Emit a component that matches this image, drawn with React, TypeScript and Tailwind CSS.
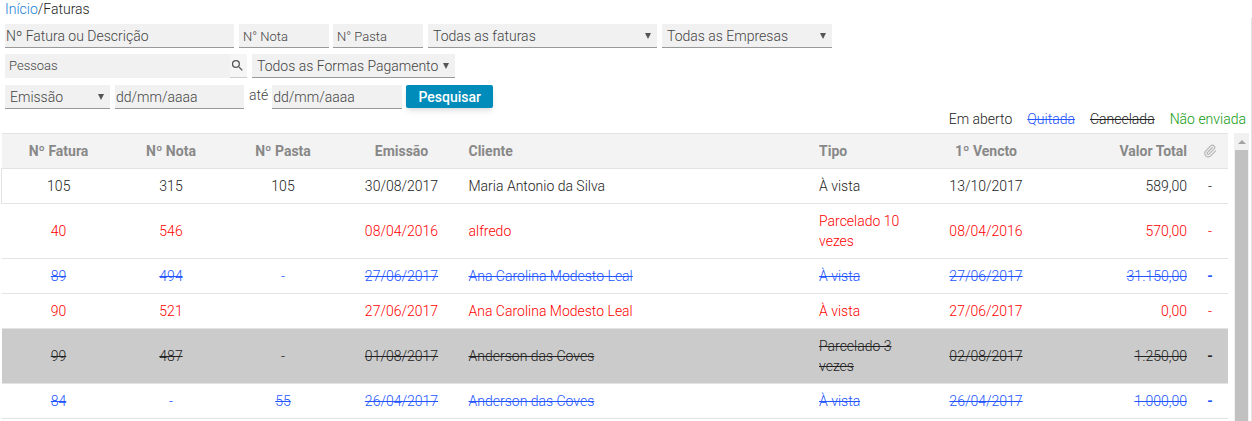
import React, { useState } from "react"
import { MdSearch } from "react-icons/md"
import { Paperclip } from "lucide-react"

type Status = "open" | "late" | "paid" | "cancelled"

type Invoice = {
	number: string,
	note: string,
	folder: string,
	issued: string,
	client: string,
	kind: string,
	due: string,
	total: string,
	status: Status,
}

const invoices: Invoice[] = [
	{ number: "105", note: "315", folder: "105", issued: "30/08/2017", client: "Maria Antonio da Silva", kind: "À vista", due: "13/10/2017", total: "589,00", status: "open" },
	{ number: "40", note: "546", folder: "", issued: "08/04/2016", client: "alfredo", kind: "Parcelado 10 vezes", due: "08/04/2016", total: "570,00", status: "late" },
	{ number: "89", note: "494", folder: "-", issued: "27/06/2017", client: "Ana Carolina Modesto Leal", kind: "À vista", due: "27/06/2017", total: "31.150,00", status: "paid" },
	{ number: "90", note: "521", folder: "", issued: "27/06/2017", client: "Ana Carolina Modesto Leal", kind: "À vista", due: "27/06/2017", total: "0,00", status: "late" },
	{ number: "99", note: "487", folder: "-", issued: "01/08/2017", client: "Anderson das Coves", kind: "Parcelado 3 vezes", due: "02/08/2017", total: "1.250,00", status: "cancelled" },
	{ number: "84", note: "-", folder: "55", issued: "26/04/2017", client: "Anderson das Coves", kind: "À vista", due: "26/04/2017", total: "1.000,00", status: "paid" },
]

const rowColor: Record<Status, string> = {
	open: "text-[#222222]",
	late: "text-[#ff0000]",
	paid: "text-[#2255ff]",
	cancelled: "bg-[#cbcbcb] text-[#222222]",
}

const field = "h-6 border-b border-[#999999] bg-[#f1f1f1] text-[#444444] placeholder:text-[#444444] placeholder:opacity-100 focus:outline-none"

type SelectProps = {
	label: string,
	options: string[],
	width: string,
}

function Select({ label, options, width }: SelectProps) {
	return (
		<div className={`relative ${width}`}>
			<select aria-label={label} className={`${field} block w-full appearance-none pl-[5px] pr-4 text-sm`}>
				{options.map((option) => (
					<option key={option}>{option}</option>
				))}
			</select>
			<svg viewBox="0 0 6 6" className="pointer-events-none absolute right-[6px] top-[9px] size-[6px] fill-[#555555]">
				<path d="M0 0h6L3 6z" />
			</svg>
		</div>
	)
}

function Struck({ on, children }: { on: boolean, children: React.ReactNode }) {
	return on && children !== "-" ? <s>{children}</s> : <>{children}</>
}

function InvoiceRow({ invoice }: { invoice: Invoice }) {
	const struck = invoice.status === "paid" || invoice.status === "cancelled"

	return (
		<tr className={`border-b border-[#e3e3e3] ${rowColor[invoice.status]}`}>
			<td className={`text-center ${invoice.status === "open" ? "border-l border-[#e3e3e3]" : ""}`}>
				<Struck on={struck}>{invoice.number}</Struck>
			</td>
			<td className="text-center"><Struck on={struck}>{invoice.note}</Struck></td>
			<td className="text-center"><Struck on={struck}>{invoice.folder}</Struck></td>
			<td className="text-center"><Struck on={struck}>{invoice.issued}</Struck></td>
			<td className="px-[5px]"><Struck on={struck}>{invoice.client}</Struck></td>
			<td className="px-[5px] py-[7px]"><Struck on={struck}>{invoice.kind}</Struck></td>
			<td className="text-center"><Struck on={struck}>{invoice.due}</Struck></td>
			<td className="px-[5px] text-right"><Struck on={struck}>{invoice.total}</Struck></td>
			<td className={`text-center ${struck ? "font-bold" : ""}`}>-</td>
		</tr>
	)
}

function App() {
	const [search, setSearch] = useState("")
	const [note, setNote] = useState("")
	const [folder, setFolder] = useState("")
	const [person, setPerson] = useState("")
	const [from, setFrom] = useState("")
	const [to, setTo] = useState("")

	return (
		<div className="flex min-h-screen flex-col bg-white font-['Roboto',sans-serif] text-sm font-light text-[#222222]">
			<nav className="pl-[5px] leading-[18px]">
				<a href="#" className="text-[#1a80d8]">Início</a>/Faturas
			</nav>

			<div className="flex flex-1 flex-col border-r border-[#e3e3e3] pt-[6px]">
				<form className="flex flex-col gap-[6px] pl-[5px]" onSubmit={(e) => e.preventDefault()}>
					<div className="flex flex-wrap gap-[5px]">
						<input aria-label="Nº Fatura ou Descrição" type="text" value={search} placeholder="Nº Fatura ou Descrição" onChange={(e) => setSearch(e.target.value)} className={`${field} w-[229px] px-px text-sm`} />
						<div className="flex gap-1">
							<input aria-label="N° Nota" type="text" value={note} placeholder="N° Nota" onChange={(e) => setNote(e.target.value)} className={`${field} w-[90px] px-1 pt-[2px] text-[13px]`} />
							<input aria-label="N° Pasta" type="text" value={folder} placeholder="N° Pasta" onChange={(e) => setFolder(e.target.value)} className={`${field} w-[90px] px-1 pt-[2px] text-[13px]`} />
						</div>
						<Select label="Situação" options={["Todas as faturas"]} width="w-[229px]" />
						<Select label="Empresa" options={["Todas as Empresas"]} width="w-[170px]" />
					</div>
					<div className="flex min-h-[25px] flex-wrap gap-[5px]">
						<div className="flex h-6 w-[242px] bg-[#f1f1f1]">
							<input aria-label="Pessoas" type="text" value={person} placeholder="Pessoas" onChange={(e) => setPerson(e.target.value)} className="min-w-0 flex-1 bg-transparent px-1 pt-px text-[13px] text-[#444444] placeholder:text-[#444444] placeholder:opacity-100 focus:outline-none" />
							<button type="button" aria-label="Buscar pessoa" className="border-b border-[#cccccc] bg-[#f5f5f5] pr-[2px] text-[#555555]">
								<MdSearch size={15} />
							</button>
						</div>
						<Select label="Forma de pagamento" options={["Todos as Formas Pagamento"]} width="w-[203px]" />
					</div>
					<div className="flex flex-wrap gap-[5px]">
						<Select label="Tipo de data" options={["Emissão"]} width="w-[105px]" />
						<input id="from" aria-label="Data inicial" type="text" value={from} placeholder="dd/mm/aaaa" onChange={(e) => setFrom(e.target.value)} className={`${field} w-[129px] px-px text-sm`} />
						<div className="flex gap-1">
							<label htmlFor="to" className="text-[#444444]">até</label>
							<input id="to" type="text" value={to} placeholder="dd/mm/aaaa" onChange={(e) => setTo(e.target.value)} className={`${field} w-[130px] px-px text-sm`} />
							<button type="submit" className="h-[23px] w-[87px] rounded-xs bg-[#008cba] font-medium text-white shadow-md">
								Pesquisar
							</button>
						</div>
					</div>
				</form>

				<div className="flex justify-end gap-[15px] pb-1 pr-[5px] leading-5">
					<span>Em aberto</span>
					<s className="text-[#2255ff]">Quitada</s>
					<s>Cancelada</s>
					<span className="text-[#119911]">Não enviada</span>
				</div>

				<div className="flex flex-1 gap-[6px] pl-px pr-[2px]">
					<div className="min-w-0 flex-1">
						<table className="w-full table-fixed border-collapse leading-5">
							<colgroup>
								<col className="w-[114px]" />
								<col className="w-[111px]" />
								<col className="w-[113px]" />
								<col className="w-[124px]" />
								<col />
								<col className="w-[110px]" />
								<col className="w-[124px]" />
								<col className="w-[144px]" />
								<col className="w-[36px]" />
							</colgroup>
							<thead>
								<tr className="border-y border-[#e3e3e3] bg-[#f3f3f3] text-[#888888]">
									<th className="py-[7px]">Nº Fatura</th>
									<th>Nº Nota</th>
									<th>Nº Pasta</th>
									<th>Emissão</th>
									<th className="px-[5px] text-left">Cliente</th>
									<th className="px-[5px] text-left">Tipo</th>
									<th>1º Vencto</th>
									<th className="px-[5px] text-right">Valor Total</th>
									<th aria-label="Anexos">
										<Paperclip size={14} strokeWidth={2} className="mx-auto text-[#b5b5b5]" />
									</th>
								</tr>
							</thead>
							<tbody>
								{invoices.map((invoice) => (
									<InvoiceRow key={invoice.number} invoice={invoice} />
								))}
							</tbody>
						</table>
					</div>

					<div className="flex w-[15px] flex-col bg-[#f1f1f1] px-px">
						<div className="flex h-[17px] items-center justify-center">
							<svg viewBox="0 0 8 4" className="h-1 w-2 fill-[#a3a3a3]">
								<path d="M0 4h8L4 0z" />
							</svg>
						</div>
						<div className="flex-1 bg-[#c1c1c1]"></div>
					</div>
				</div>
			</div>
		</div>
	)
}

export default App
